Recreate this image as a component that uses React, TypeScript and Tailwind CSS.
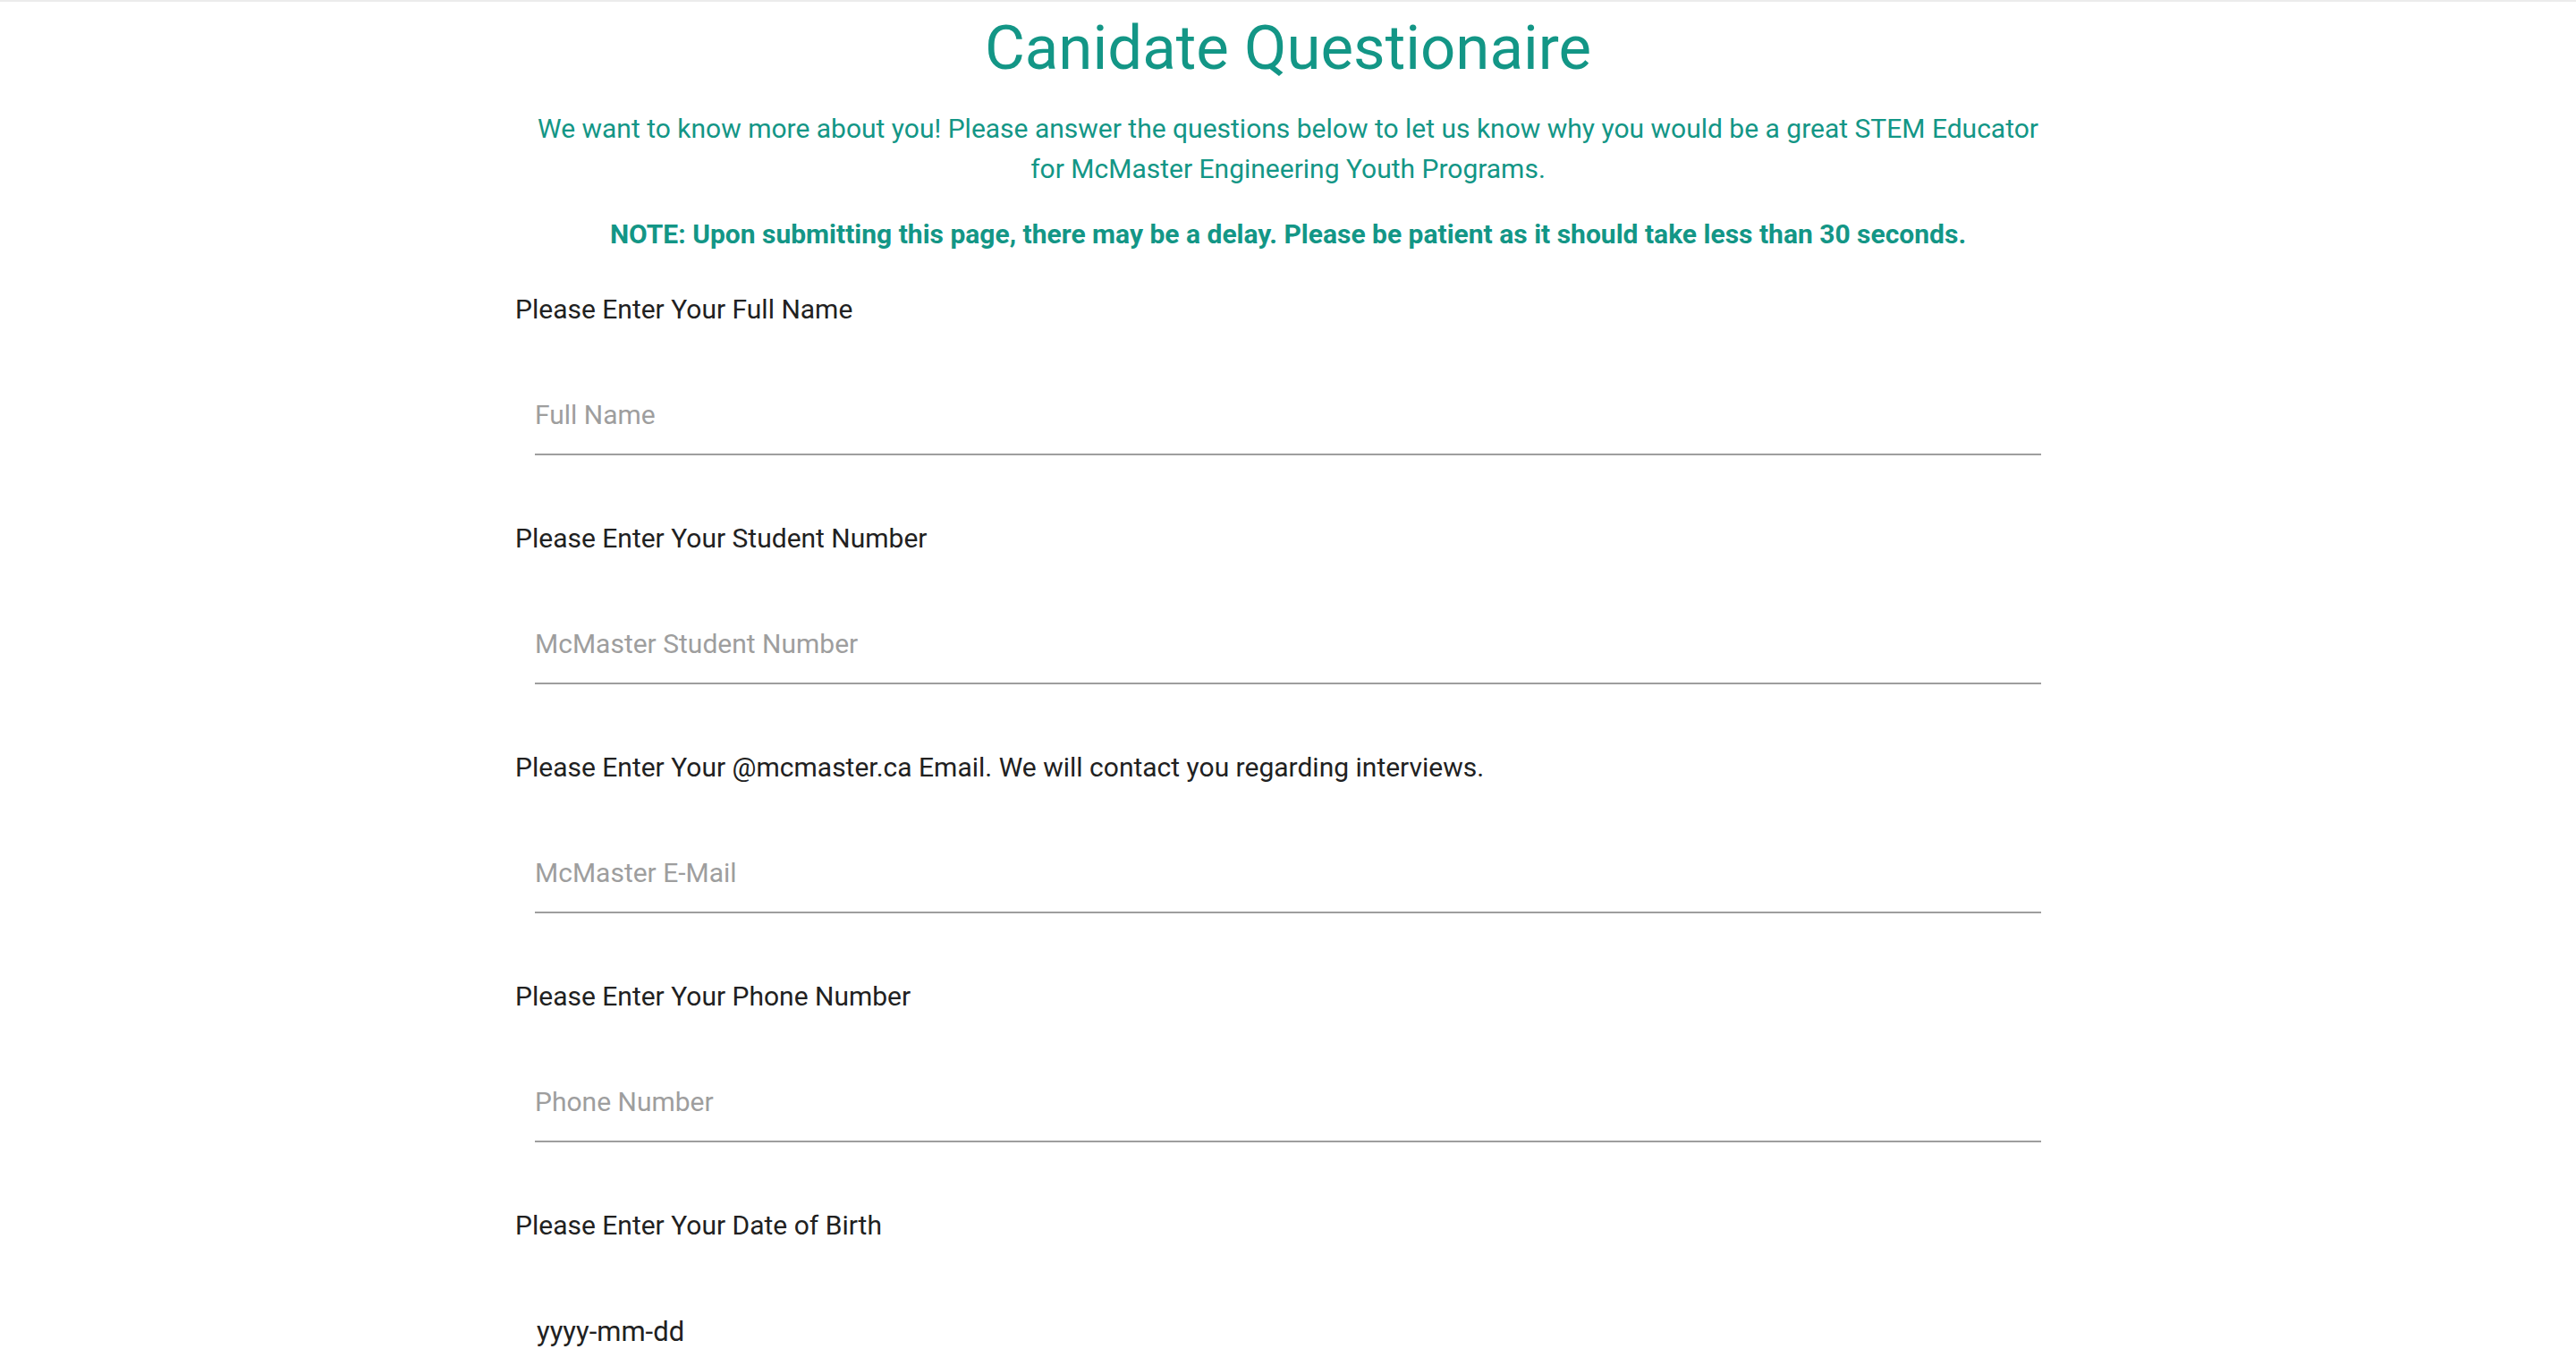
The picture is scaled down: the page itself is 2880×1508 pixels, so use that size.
import React from "react";

const teal = "text-[#139686]";

const fields = [
  { label: "Please Enter Your Full Name", placeholder: "Full Name" },
  { label: "Please Enter Your Student Number", placeholder: "McMaster Student Number" },
  {
    label: "Please Enter Your @mcmaster.ca Email. We will contact you regarding interviews.",
    placeholder: "McMaster E-Mail",
  },
  { label: "Please Enter Your Phone Number", placeholder: "Phone Number" },
  { label: "Please Enter Your Date of Birth", placeholder: "yyyy-mm-dd", date: true },
];

function Field({ label, placeholder, date }: { label: string; placeholder: string; date?: boolean }) {
  return (
    <div>
      <label className="block text-[30px] leading-[45px] text-[#212121]">{label}</label>
      <div className="mt-[52px] px-[22px]">
        <input
          type="text"
          placeholder={placeholder}
          className={
            date
              ? "block h-[89px] w-full bg-transparent pl-[2px] text-[31px] text-[#212121] outline-none placeholder:text-[#212121]"
              : "block h-[89px] w-full border-b-2 border-[#9e9e9e] bg-transparent text-[30px] text-[#212121] outline-none placeholder:text-[#9e9e9e]"
          }
        />
      </div>
    </div>
  );
}

export default function App() {
  return (
    <div className="min-h-screen border-t-2 border-[#ebebeb] bg-white font-['Roboto','Liberation_Sans',sans-serif]">
      <div className="mx-auto w-[60%] pb-[80px]">
        <h1 className={`mt-[10px] text-center text-[69px] font-normal leading-[84px] ${teal}`}>
          Canidate Questionaire
        </h1>
        <p className={`mt-[25px] text-center text-[30px] leading-[45px] ${teal}`}>
          We want to know more about you! Please answer the questions below to let us know why you would be a great STEM Educator
          <br />
          for McMaster Engineering Youth Programs.
        </p>
        <p className={`mt-[28px] text-center text-[30px] font-bold leading-[45px] ${teal}`}>
          NOTE: Upon submitting this page, there may be a delay. Please be patient as it should take less than 30 seconds.
        </p>
        <form className="mt-[39px] flex flex-col gap-[70px]">
          {fields.map((f) => (
            <Field key={f.label} {...f} />
          ))}
        </form>
      </div>
    </div>
  );
}
